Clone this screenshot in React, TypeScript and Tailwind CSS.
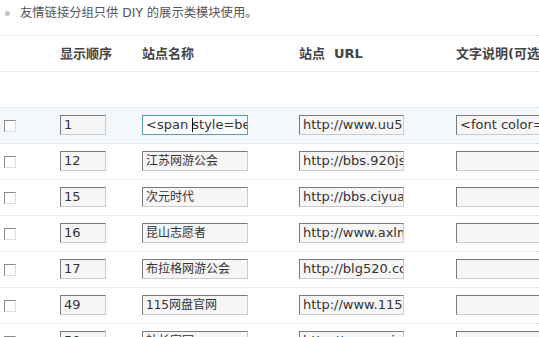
import React from "react";

type Row = { num: string; name: string; url: string; desc: string; active?: boolean };

const rows: Row[] = [
  { num: "1", name: "<span style=bel", url: "http://www.uu5.com/", desc: "<font color=red>", active: true },
  { num: "12", name: "江苏网游公会", url: "http://bbs.920jsw.com/", desc: "" },
  { num: "15", name: "次元时代", url: "http://bbs.ciyuan.com/", desc: "" },
  { num: "16", name: "昆山志愿者", url: "http://www.axlmzy.com/", desc: "" },
  { num: "17", name: "布拉格网游公会", url: "http://blg520.com/", desc: "" },
  { num: "49", name: "115网盘官网", url: "http://www.115.com/", desc: "" },
  { num: "50", name: "站长家园", url: "http://www.zzjy.com/", desc: "" },
];

const inputBase =
  "h-[20px] border border-t-[#7b7b7b] border-l-[#7b7b7b] border-r-[#cbcbcb] border-b-[#cbcbcb] bg-[#f6f6f6] overflow-hidden whitespace-nowrap pl-[3px] leading-[18px] text-[#333] font-['DejaVu_Sans','Noto_Sans_CJK_SC',sans-serif]";

function Checkbox() {
  return (
    <div className="w-[12px] h-[12px] border border-t-[#8a8a8a] border-l-[#8a8a8a] border-r-[#dcdcdc] border-b-[#dcdcdc] bg-white" />
  );
}

export default function App() {
  return (
    <div className="w-[539px] h-[337px] overflow-hidden bg-white font-['DejaVu_Sans','Noto_Sans_CJK_SC',sans-serif] text-[12px] text-[#555]">
      {/* notice */}
      <div className="h-[36px] border-b border-dotted border-[#d8d8d8] flex items-start pt-[5px]">
        <div className="w-[20px] shrink-0 h-[16px] flex items-center justify-start pl-[5px]">
          <div className="w-[5px] h-[5px] rounded-full bg-[#c4c4c4]" />
        </div>
        <span className="leading-[16px] text-[12.3px] text-[#555]">友情链接分组只供 DIY 的展示类模块使用。</span>
      </div>
      {/* header */}
      <div className="h-[36px] border-b border-dotted border-[#d8d8d8] flex items-center font-bold text-[#444] text-[13px] whitespace-nowrap">
        <div className="w-[60px] shrink-0" />
        <div className="w-[82px] shrink-0">显示顺序</div>
        <div className="w-[157px] shrink-0">站点名称</div>
        <div className="w-[157px] shrink-0">
          站点<span className="ml-[9px]">URL</span>
        </div>
        <div className="shrink-0">文字说明(可选)</div>
      </div>
      {/* empty row */}
      <div className="h-[36px] border-b border-dotted border-[#d8d8d8]" />
      {rows.map((r, i) => (
        <div
          key={i}
          className={`h-[36px] border-b border-dotted border-[#d8d8d8] flex items-start pt-[7px] ${r.active ? "bg-[#f2f8fc]" : ""}`}
        >
          <div className="w-[60px] shrink-0 pl-[4px] pt-[5px]">
            <Checkbox />
          </div>
          <div className="w-[82px] shrink-0">
            <div className={`${inputBase} w-[46px] text-[13px]`}>{r.num}</div>
          </div>
          <div className="w-[157px] shrink-0">
            {r.active ? (
              <div className="h-[20px] w-[106px] border border-[#52a3bb] bg-[#fbfbfb] overflow-hidden whitespace-pre pl-[3px] text-[13px] leading-[18px] text-[#333] font-['DejaVu_Sans','Noto_Sans_CJK_SC',sans-serif]">
                {"<span "}
                <span className="inline-block w-px h-[14px] bg-black align-[-3px] -mr-px" />
                {"style=bel"}
              </div>
            ) : (
              <div className={`${inputBase} w-[106px] text-[12px]`}>{r.name}</div>
            )}
          </div>
          <div className="w-[157px] shrink-0">
            <div className={`${inputBase} w-[105px] text-[13px]`}>{r.url}</div>
          </div>
          <div className="shrink-0">
            <div className={`${inputBase} w-[200px] text-[13px]`}>{r.desc}</div>
          </div>
        </div>
      ))}
    </div>
  );
}
